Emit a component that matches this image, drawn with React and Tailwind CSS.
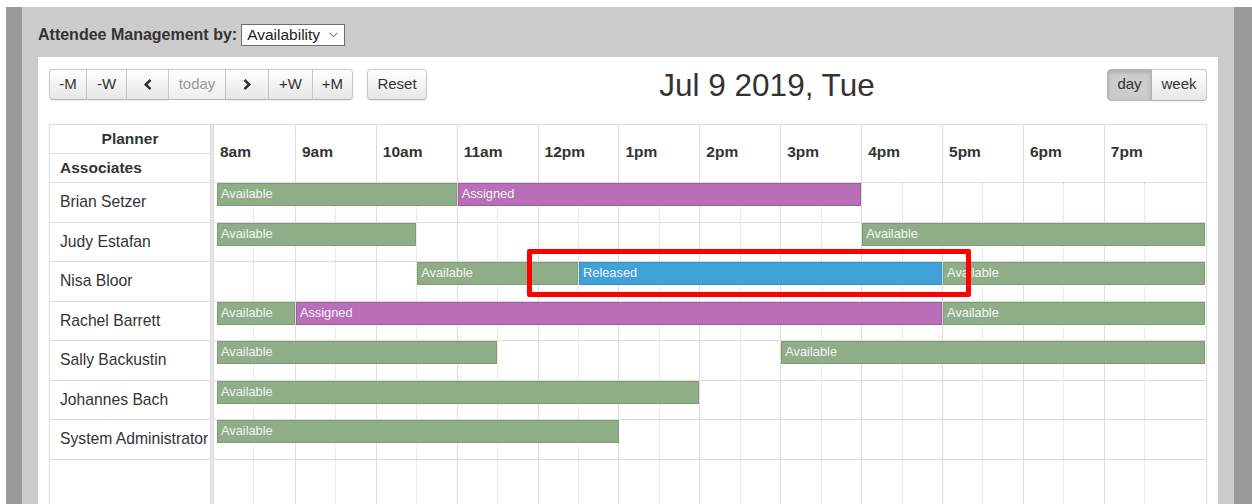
const HOUR = 80.9;
const AREA = 993;

const hours = ['8am', '9am', '10am', '11am', '12pm', '1pm', '2pm', '3pm', '4pm', '5pm', '6pm', '7pm'];

const kinds = {
  available: { label: 'Available', cls: 'bg-[#8fae88] border-[#7b9d73]' },
  assigned: { label: 'Assigned', cls: 'bg-[#b86fb8] border-[#a25aa2]' },
  released: { label: 'Released', cls: 'bg-[#42a1d9] border-[#3490cc]' },
};

// [kind, start hour offset, end hour offset | null = end of range]
const associates = [
  { name: 'Brian Setzer', events: [['available', 0, 3], ['assigned', 3, 8]] },
  { name: 'Judy Estafan', events: [['available', 0, 2.5], ['available', 8, null]] },
  { name: 'Nisa Bloor', events: [['available', 2.5, 4.5], ['released', 4.5, 9], ['available', 9, null]] },
  { name: 'Rachel Barrett', events: [['available', 0, 1], ['assigned', 1, 9], ['available', 9, null]] },
  { name: 'Sally Backustin', events: [['available', 0, 3.5], ['available', 7, null]] },
  { name: 'Johannes Bach', events: [['available', 0, 6]] },
  { name: 'System Administrator', events: [['available', 0, 5]] },
];

const btn =
  'h-[31px] flex items-center justify-center border border-[#c9c9c9] border-b-[#b3b3b3] bg-linear-to-b from-white to-[#e6e6e6] text-[15px] text-[#333] shadow-[0_1px_2px_rgba(0,0,0,0.08)]';

function Chevron({ dir }) {
  return (
    <svg width="10" height="13" viewBox="0 0 10 13">
      <polyline
        points={dir === 'left' ? '7.5,1.8 2.8,6.5 7.5,11.2' : '2.5,1.8 7.2,6.5 2.5,11.2'}
        fill="none"
        stroke="#333"
        strokeWidth="2.6"
      />
    </svg>
  );
}

function Toolbar() {
  return (
    <div className="flex items-center">
      <div className="flex items-center">
        <div className="flex">
          <div className={`${btn} w-[38px] rounded-l-[4px]`}>-M</div>
          <div className={`${btn} w-[40px] border-l-0`}>-W</div>
          <div className={`${btn} w-[42px] border-l-0`}><Chevron dir="left" /></div>
          <div className={`${btn} w-[57px] border-l-0 from-[#f7f7f7] to-[#eeeeee] text-[#999] shadow-none`}>today</div>
          <div className={`${btn} w-[43px] border-l-0`}><Chevron dir="right" /></div>
          <div className={`${btn} w-[44px] border-l-0`}>+W</div>
          <div className={`${btn} w-[40px] border-l-0 rounded-r-[4px]`}>+M</div>
        </div>
        <div className={`${btn} w-[60px] ml-[14px] rounded-[4px]`}>Reset</div>
      </div>

      <div className="flex-1 text-center text-[31.5px] leading-[32px] text-[#333] pt-[1px]">
        Jul 9 2019, Tue
      </div>

      <div className="flex">
        <div className="h-[32px] w-[45px] flex items-center justify-center rounded-l-[4px] border border-[#b5b5b5] bg-[#cccccc] text-[15px] text-[#333] shadow-[inset_0_2px_4px_rgba(0,0,0,0.18)]">
          day
        </div>
        <div className={`${btn} h-[32px] w-[55px] border-l-0 rounded-r-[4px]`}>week</div>
      </div>
    </div>
  );
}

function Bar({ kind, start, end }) {
  const left = start * HOUR + (start === 0 ? 3 : 1);
  const right = end === null ? AREA - 2 : end * HOUR;
  const k = kinds[kind];
  return (
    <div
      className={`absolute top-0 h-[23px] border ${k.cls} text-[12.8px] leading-[20px] text-[#f4f4f4] pl-[3px] overflow-hidden whitespace-nowrap`}
      style={{ left, width: right - left }}
    >
      {k.label}
    </div>
  );
}

function Schedule() {
  return (
    <div className="flex border-t border-r border-[#dddddd] text-[#333]">
      {/* resource column */}
      <div className="w-[161px] border-l border-[#dddddd] flex flex-col">
        <div className="h-[29px] border-b border-[#dddddd] flex items-center justify-center font-bold text-[15.5px]">
          Planner
        </div>
        <div className="h-[29px] border-b border-[#dddddd] flex items-center pl-[10px] font-bold text-[15.5px]">
          Associates
        </div>
        {associates.map((a) => (
          <div key={a.name} className="h-[39.5px] border-b border-[#dddddd] flex items-center pl-[10px] text-[15.7px] whitespace-nowrap">
            {a.name}
          </div>
        ))}
        <div className="h-[60px]" />
      </div>

      {/* divider */}
      <div className="w-[4px] bg-[#e8e8e8] border-x border-[#dddddd]" />

      {/* time area */}
      <div className="flex-1 flex flex-col">
        <div className="h-[58px] flex border-b border-[#dddddd]">
          {hours.map((h, i) => (
            <div
              key={h}
              className={`${i === hours.length - 1 ? 'flex-1' : 'w-[80.9px]'} ${i === 0 ? '' : 'border-l border-[#dddddd]'} flex items-center pl-[6px] pb-[3px] font-bold text-[15.5px]`}
            >
              {h}
            </div>
          ))}
        </div>

        <div className="grid">
          {/* slot lines */}
          <div className="col-start-1 row-start-1 flex h-[340px]">
            {hours.map((h, i) => (
              <div
                key={h}
                className={`${i === hours.length - 1 ? 'flex-1' : 'w-[80.9px]'} ${i === 0 ? '' : 'border-l border-[#dddddd]'} h-full`}
              >
                <div className="w-[40.4px] h-full border-r border-dotted border-[#d4d4d4]" />
              </div>
            ))}
          </div>

          {/* event rows */}
          <div className="col-start-1 row-start-1 flex flex-col">
            {associates.map((a) => (
              <div key={a.name} className="relative h-[39.5px] border-b border-[#dddddd]">
                {a.events.map(([kind, s, e], j) => (
                  <Bar key={j} kind={kind} start={s} end={e} />
                ))}
              </div>
            ))}
          </div>
        </div>
      </div>
    </div>
  );
}

export default function App() {
  return (
    <div className="relative w-[1252px] h-[504px] overflow-hidden bg-white pt-[7px] font-['Liberation_Sans',Arial,sans-serif]">
      <div className="flex h-full">
        <div className="w-[6px] bg-white" />
        <div className="w-[16px] bg-[#999999]" />

        <div className="flex-1 bg-[#cccccc] pl-[16px] pr-[16px] pt-[17px]">
          <div className="flex items-center h-[22px]">
            <span className="font-bold text-[16px] text-[#333]">Attendee Management by:</span>
            <div className="ml-[4px] h-[22px] w-[104px] border border-[#6f6f6f] bg-white flex items-center pl-[5px] pr-[6px] text-[15.5px] text-[#222]">
              <span className="flex-1">Availability</span>
              <svg width="9" height="6" viewBox="0 0 9 6">
                <polyline points="0.5,0.8 4.5,4.8 8.5,0.8" fill="none" stroke="#555" strokeWidth="1" />
              </svg>
            </div>
          </div>

          <div className="mt-[11px] bg-white px-[11px] pt-[11px] h-[500px]">
            <Toolbar />
            <div className="mt-[23px]">
              <Schedule />
            </div>
          </div>
        </div>

        <div className="w-[18px] bg-[#999999]" />
      </div>

      {/* highlight frame */}
      <div className="absolute left-[527px] top-[249px] w-[444px] h-[48px] border-[5px] border-[#ff0000] rounded-[2px]" />
    </div>
  );
}
